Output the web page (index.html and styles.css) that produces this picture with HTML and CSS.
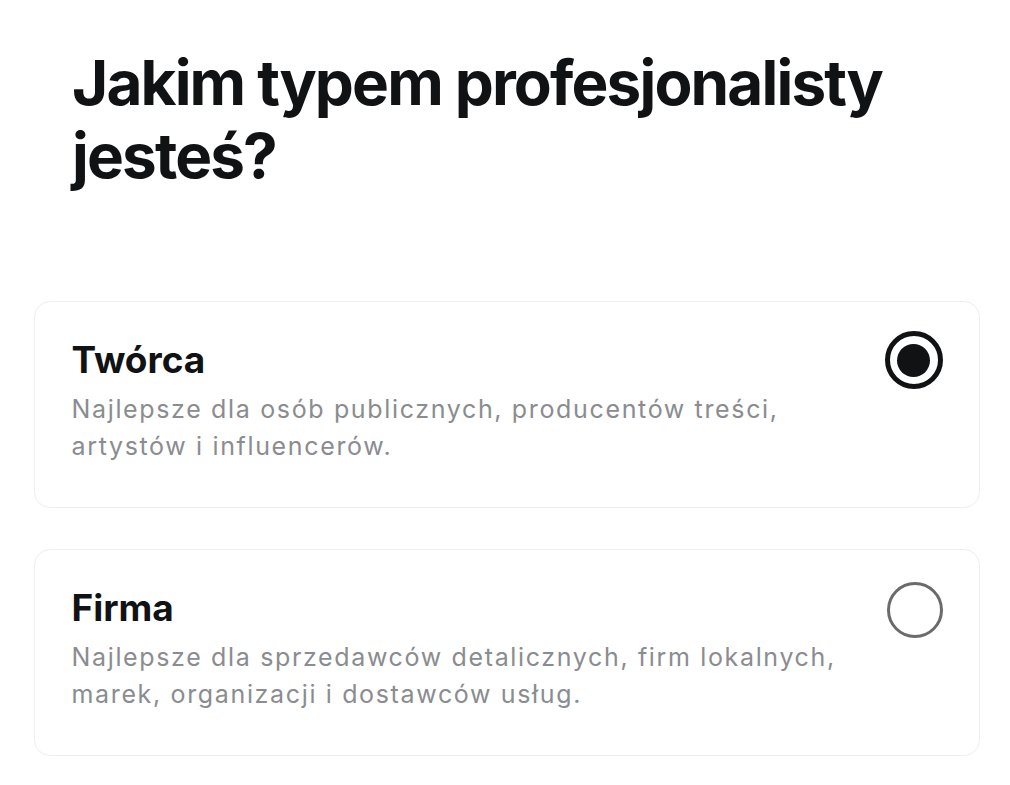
FILE: index.html
```html
<!DOCTYPE html>
<html lang="pl">
<head>
    <meta charset="UTF-8">
    <meta name="viewport" content="width=device-width, initial-scale=1.0">
    <title>Typ konta</title>
    <link rel="stylesheet" href="styles.css">
</head>
<body>
    <div class="page">
        <h1 class="title">Jakim typem profesjonalisty jesteś?</h1>

        <div class="options">
            <label class="option">
                <div class="option-text">
                    <span class="option-name">Twórca</span>
                    <span class="option-desc">Najlepsze dla osób publicznych, producentów treści, artystów i influencerów.</span>
                </div>
                <span class="radio checked"></span>
            </label>

            <label class="option">
                <div class="option-text">
                    <span class="option-name">Firma</span>
                    <span class="option-desc">Najlepsze dla sprzedawców detalicznych, firm lokalnych, marek, organizacji i dostawców usług.</span>
                </div>
                <span class="radio"></span>
            </label>
        </div>
    </div>
</body>
</html>
```

FILE: styles.css
```css
body {
    margin: 0;
    background-color: #ffffff;
    color: #111214;
    font-family: Inter, 'Noto Sans', sans-serif;
}
.page {
    padding: 46px 30px 0 34px;
}
.title {
    margin: 0 0 109px 38px;
    font-size: 62px;
    font-weight: 700;
    line-height: 73px;
    letter-spacing: -1.85px;
    max-width: 880px;
}
.options {
    display: flex;
    flex-direction: column;
    gap: 41px;
}
/* One selectable card */
.option {
    display: flex;
    align-items: flex-start;
    justify-content: space-between;
    border: 1.5px solid #eeeeef;
    border-radius: 16px;
    padding: 37px 36.5px 42px 36.5px;
    cursor: pointer;
}
.option-text {
    display: flex;
    flex-direction: column;
}
.option-name {
    font-size: 37px;
    font-weight: 700;
    line-height: 42px;
    margin-bottom: 10px;
}
.option-desc {
    font-size: 25px;
    line-height: 37px;
    letter-spacing: 1.65px;
    color: #8a8c90;
    max-width: 840px;
}
/* Radio circle */
.radio {
    flex-shrink: 0;
    width: 50px;
    height: 50px;
    border: 3px solid #6b6b6e;
    border-radius: 50%;
    margin-top: -5px;
    display: flex;
    align-items: center;
    justify-content: center;
}
.radio.checked {
    width: 48px;
    height: 48px;
    border: 5px solid #111214;
    margin-top: -8px;
}
.radio.checked::after {
    content: "";
    width: 33px;
    height: 33px;
    border-radius: 50%;
    background-color: #111214;
}
```
